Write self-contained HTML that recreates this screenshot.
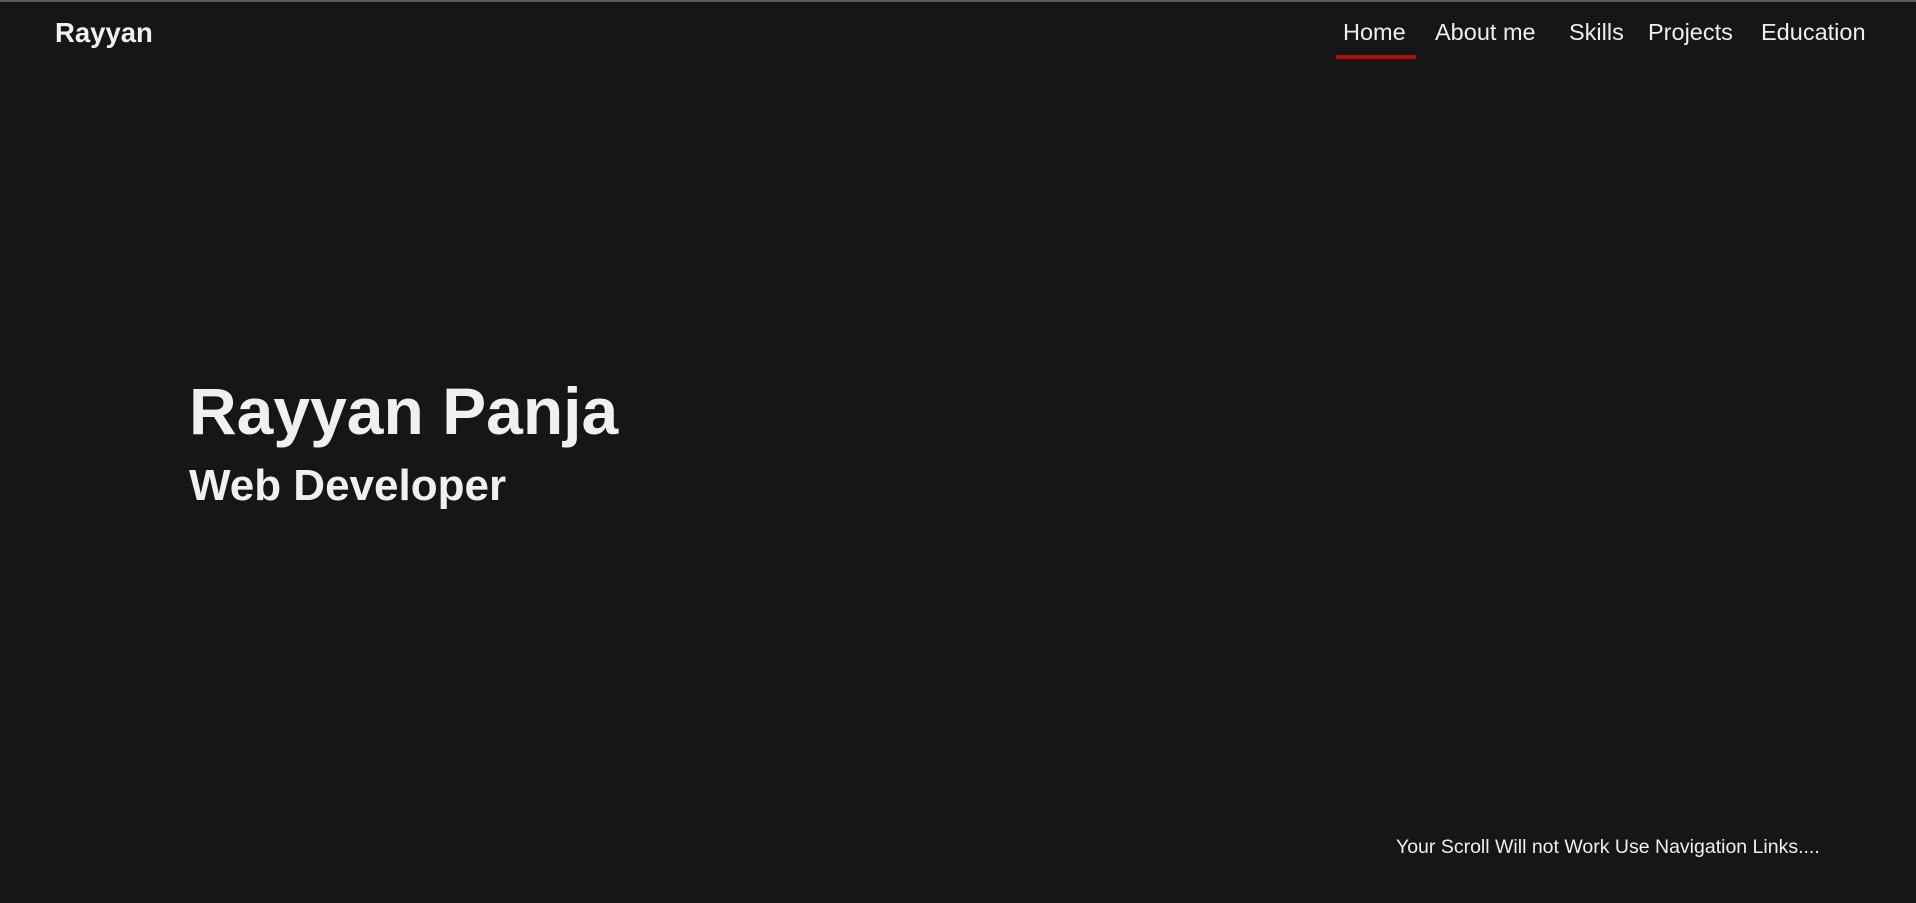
<!DOCTYPE html>
<html><head><meta charset="utf-8"><style>
html,body{margin:0;padding:0;width:1916px;height:903px;overflow:hidden;background:#161616;font-family:"Liberation Sans",sans-serif;color:#f0f0f0}
.top{position:absolute;left:0;top:0;width:1916px;height:2px;background:#5a5a5a}
.a{position:absolute;white-space:nowrap;line-height:1}
.logo{left:55px;top:19px;font-size:27.5px;font-weight:bold}
.nav{font-size:23.5px;top:21px;color:#eee}
.ul{position:absolute;left:1336px;top:55px;width:80px;height:4px;background:#b30c0c}
.name{left:189px;top:378px;font-size:66px;font-weight:bold}
.role{left:189px;top:464px;font-size:44px;font-weight:bold}
.foot{left:1396px;top:838px;font-size:19.5px;color:#eee}
</style></head><body>
<div class="top"></div>
<div class="a logo">Rayyan</div>
<div class="a nav" style="left:1343px">Home</div>
<div class="a nav" style="left:1435px">About me</div>
<div class="a nav" style="left:1569px">Skills</div>
<div class="a nav" style="left:1648px">Projects</div>
<div class="a nav" style="left:1761px">Education</div>
<div class="ul"></div>
<div class="a name">Rayyan Panja</div>
<div class="a role">Web Developer</div>
<div class="a foot">Your Scroll Will not Work Use Navigation Links....</div>
</body></html>
